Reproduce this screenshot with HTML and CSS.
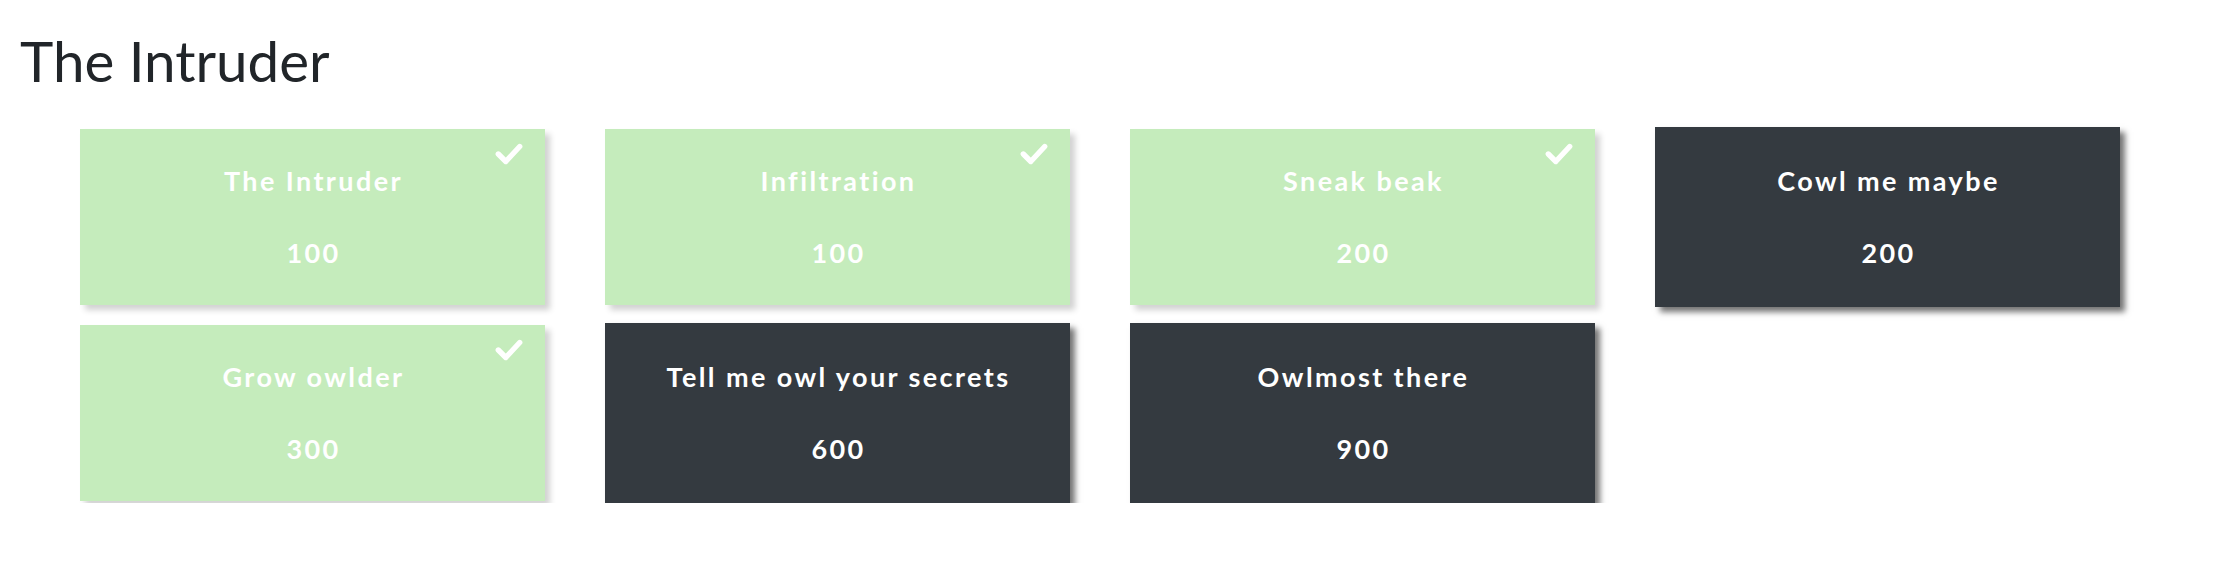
FILE: index.html
```html
<!DOCTYPE html>
<html lang="en">
<head>
<meta charset="utf-8">
<title>The Intruder</title>
<link rel="stylesheet" href="styles.css">
</head>
<body>
<h1 class="title">The Intruder</h1>
<div class="board">
  <div class="card done">
    <svg class="check" viewBox="0 0 28 22"><polyline points="4,11 11,18 24,4"/></svg>
    <div class="name">The Intruder</div>
    <div class="points">100</div>
  </div>
  <div class="card done">
    <svg class="check" viewBox="0 0 28 22"><polyline points="4,11 11,18 24,4"/></svg>
    <div class="name">Infiltration</div>
    <div class="points">100</div>
  </div>
  <div class="card done">
    <svg class="check" viewBox="0 0 28 22"><polyline points="4,11 11,18 24,4"/></svg>
    <div class="name">Sneak beak</div>
    <div class="points">200</div>
  </div>
  <div class="card">
    <div class="name">Cowl me maybe</div>
    <div class="points">200</div>
  </div>
  <div class="card done">
    <svg class="check" viewBox="0 0 28 22"><polyline points="4,11 11,18 24,4"/></svg>
    <div class="name">Grow owlder</div>
    <div class="points">300</div>
  </div>
  <div class="card">
    <div class="name">Tell me owl your secrets</div>
    <div class="points">600</div>
  </div>
  <div class="card">
    <div class="name">Owlmost there</div>
    <div class="points">900</div>
  </div>
</div>
</body>
</html>
```
FILE: styles.css
```css
html, body {
  margin: 0;
  padding: 0;
  background: #ffffff;
}
body {
  font-family: Lato, "Open Sans", sans-serif;
  color: #212529;
}
.title {
  margin: 0;
  padding: 27px 0 0 20px;
  font-size: 56.5px;
  font-weight: 400;
  line-height: 1.2;
  height: 127px;
  box-sizing: border-box;
}
.board {
  display: grid;
  grid-template-columns: repeat(4, 465px);
  grid-auto-rows: 180px;
  column-gap: 60px;
  row-gap: 16px;
  padding-left: 80px;
}
.card {
  position: relative;
  display: flex;
  flex-direction: column;
  align-items: center;
  gap: 40px;
  padding-top: 38px;
  padding-left: 2px;
  box-sizing: border-box;
  background: #343a40;
  color: #ffffff;
  box-shadow: 5px 5px 6px rgba(0, 0, 0, 0.55);
  font-weight: 700;
  font-size: 27px;
  line-height: 1.2;
  letter-spacing: 2.4px;
}
.card.done {
  background: #c5ecbc;
  margin: 2px 0;
  padding-top: 36px;
  box-shadow: 5px 5px 6px rgba(0, 0, 0, 0.18);
}
.check {
  position: absolute;
  top: 13px;
  right: 21px;
  width: 30px;
  height: 24px;
  fill: none;
  stroke: #ffffff;
  stroke-width: 5;
  stroke-linecap: round;
  stroke-linejoin: round;
}
```
